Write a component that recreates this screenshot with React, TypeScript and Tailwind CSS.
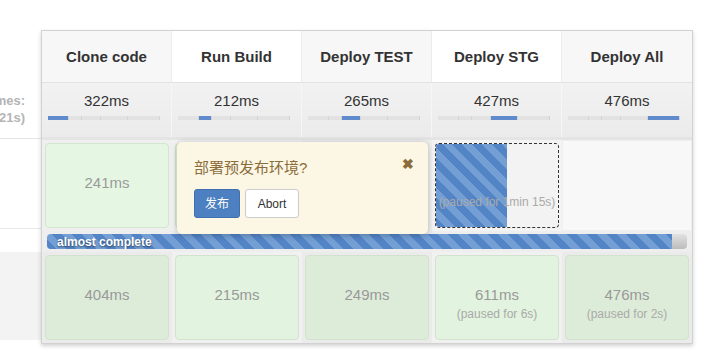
import React from 'react';

const stages = ['Clone code', 'Run Build', 'Deploy TEST', 'Deploy STG', 'Deploy All'];
const avgTimes = ['322ms', '212ms', '265ms', '427ms', '476ms'];
// segment widths of the small timeline bar, one is highlighted per stage
const segments = [21, 13, 19, 27, 32];

const headBg = ['bg-[#f7f7f7]', 'bg-white', 'bg-[#f7f7f7]', 'bg-white', 'bg-[#f7f7f7]'];

const stripes =
  'bg-[image:repeating-linear-gradient(45deg,#5384c6_0px,#5384c6_7px,#739fd4_7px,#739fd4_14px)]';

const lastRun = [
  { ms: '404ms', bg: 'bg-[#ddecd9]' },
  { ms: '215ms', bg: 'bg-[#e2f3df]' },
  { ms: '249ms', bg: 'bg-[#ddecd9]' },
  { ms: '611ms', bg: 'bg-[#e2f3df]', note: '(paused for 6s)' },
  { ms: '476ms', bg: 'bg-[#ddecd9]', note: '(paused for 2s)' },
];

const MiniBar = ({ active }: { active: number }) => (
  <div className="flex h-[4px] w-[112px] ml-[6px] gap-[1px] bg-[#d4d4d4]">
    {segments.map((w, i) => (
      <div
        key={i}
        style={{ width: w - 1 }}
        className={i === active ? 'h-full bg-[#5f8acb]' : 'h-full bg-[#e2e2e2]'}
      />
    ))}
  </div>
);

export default function App() {
  return (
    <div className="relative w-[719px] h-[356px] overflow-hidden bg-white pt-[30px] font-['Liberation_Sans',Arial,sans-serif]">
      <div className="flex">
        {/* row labels, mostly cut off on the left */}
        <div className="w-[41px] flex flex-col">
          <div className="h-[53px]" />
          <div className="h-[56px] border-b border-[#e4e4e4] flex flex-col items-end justify-center pr-[16px] overflow-hidden whitespace-nowrap text-[13px] font-bold text-[#b4b4b4] leading-[17px] pb-[3px]">
            <span>Average stage times:</span>
            <span>(Average full run time: ~21s)</span>
          </div>
          <div className="h-[90px] border-b border-[#e8e8e8]" />
          <div className="h-[23px]" />
          <div className="h-[88px] bg-[#f3f3f3]" />
        </div>

        {/* stage table */}
        <div className="w-[652px] border border-[#d2d2d2] shadow-[0_2px_4px_rgba(0,0,0,0.18)] bg-[#ececec]">
          <div className="grid grid-cols-5 h-[52px] border-b border-[#e2e2e2]">
            {stages.map((s, i) => (
              <div
                key={s}
                className={`${headBg[i]} flex items-center justify-center pt-[2px] text-[15px] font-bold text-[#333] border-r border-[#ececec] last:border-r-0`}
              >
                {s}
              </div>
            ))}
          </div>

          <div className="grid grid-cols-5 h-[57px] border-b-[3px] border-[#e4e4e4]">
            {avgTimes.map((t, i) => (
              <div
                key={t}
                className="flex flex-col pt-[9px] bg-gradient-to-b from-[#f2f2f2] to-[#ebebeb] border-r border-[#f6f6f6] last:border-r-0"
              >
                <div className="text-center text-[15px] text-[#333] leading-[18px]">{t}</div>
                <div className="mt-[6px]">
                  <MiniBar active={i} />
                </div>
              </div>
            ))}
          </div>

          {/* running build */}
          <div className="grid grid-cols-5 h-[91px]">
            <div className="p-[3px] bg-[#efefef]">
              <div className="h-full rounded-[4px] border border-[#d3e6cf] bg-[#e5f6e2] flex justify-center pt-[30px] text-[15px] leading-[18px] text-[#9a9a9a]">
                241ms
              </div>
            </div>
            <div className="p-[3px] bg-[#f3f3f3]">
              <div className="h-full rounded-[4px] border border-[#d3e6cf] bg-[#e5f6e2]" />
            </div>
            <div className="p-[3px] bg-[#efefef]" />
            <div className="p-[3px] bg-[#f3f3f3]">
              <div className="relative h-full rounded-[4px] border border-dashed border-[#333] bg-[#f3f3f3] overflow-hidden">
                <div className={`absolute left-0 top-0 bottom-0 w-[71px] ${stripes}`} />
                <div className="absolute left-0 right-0 top-[49px] text-center text-[12px] text-[#aaa] whitespace-nowrap">
                  (paused for 1min 15s)
                </div>
              </div>
            </div>
            <div className="p-[1px] bg-[#efefef]">
              <div className="h-full bg-[#f8f8f8]" />
            </div>
          </div>

          {/* overall progress */}
          <div className="h-[21px] px-[5px] pt-[3px] bg-[#eeeeee]">
            <div className="relative h-[15px] rounded-[4px] bg-gradient-to-b from-[#e2e2e2] to-[#bcbcbc] overflow-hidden">
              <div className={`absolute left-0 top-0 bottom-0 w-[625px] ${stripes}`} />
              <div className="absolute left-[10px] top-0 h-full flex items-center text-[12px] font-bold text-white [text-shadow:0_1px_2px_rgba(0,0,0,0.55)]">
                almost complete
              </div>
            </div>
          </div>

          {/* previous build */}
          <div className="grid grid-cols-5 h-[91px]">
            {lastRun.map((c, i) => (
              <div key={i} className={`p-[3px] ${i % 2 ? 'bg-[#f1f1f1]' : 'bg-[#ebebeb]'}`}>
                <div
                  className={`h-full rounded-[4px] border border-[#d2e2ce] ${c.bg} flex flex-col items-center pt-[30px]`}
                >
                  <div className="text-[15px] text-[#999] leading-[18px]">{c.ms}</div>
                  {c.note && <div className="text-[12px] text-[#aaa] leading-[16px] mt-[2px]">{c.note}</div>}
                </div>
              </div>
            ))}
          </div>
        </div>
      </div>

      {/* input prompt popover */}
      <div className="absolute left-[177px] top-[142px] w-[251px] h-[92px] rounded-[5px] bg-[#fcf6e4] shadow-[0_1px_6px_rgba(0,0,0,0.25)] px-[17px] pt-[15px]">
        <div className="flex items-start justify-between">
          <div className="text-[15px] text-[#8a6d3b] leading-[22px] font-['Liberation_Sans','Noto_Sans_CJK_SC',sans-serif]">
            部署预发布环境?
          </div>
          <div className="text-[14px] font-bold text-[#8a6d3b] leading-[14px] mr-[-3px]">✖</div>
        </div>
        <div className="flex gap-[5px] mt-[10px]">
          <button className="h-[29px] w-[46px] rounded-[3px] bg-[#4c80c0] border border-[#3f6fae] text-white text-[12px] font-['Liberation_Sans','Noto_Sans_CJK_SC',sans-serif]">
            发布
          </button>
          <button className="h-[29px] w-[54px] rounded-[3px] bg-white border border-[#cccccc] text-[#333] text-[12px]">
            Abort
          </button>
        </div>
      </div>
    </div>
  );
}
